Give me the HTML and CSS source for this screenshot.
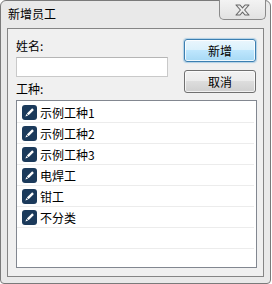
FILE: index.html
```html
<!DOCTYPE html>
<html lang="zh-CN">
<head>
    <meta charset="UTF-8">
    <title>新增员工</title>
    <link rel="stylesheet" href="styles.css">
</head>
<body>
    <div class="window">
        <div class="titlebar">新增员工</div>
        <div class="close">
            <svg width="17" height="12" viewBox="0 0 17 12">
                <path d="M2,1 L6,1 L8.5,3.8 L11,1 L15,1 L10.6,6 L15,11 L11,11 L8.5,8.2 L6,11 L2,11 L6.4,6 Z" fill="#ececec" stroke="#666" stroke-width="1.1" stroke-linejoin="round"/>
            </svg>
        </div>
        <div class="client">
            <div class="top">
                <div class="fields">
                    <div class="label">姓名:</div>
                    <input class="textbox" type="text">
                    <div class="label label_kind">工种:</div>
                </div>
                <div class="buttons">
                    <button class="btn btn_default">新增</button>
                    <button class="btn">取消</button>
                </div>
            </div>
            <div class="listbox" id="kindList">
            </div>
        </div>
    </div>

    <script>
        // 工种リスト
        const kinds = ["示例工种1", "示例工种2", "示例工种3", "电焊工", "钳工", "不分类", "", ""];

        function createRow(name) {
            const row = document.createElement("div");
            row.className = "row";
            if (name) {
                row.innerHTML = '<svg class="check" width="15" height="15" viewBox="0 0 15 15">'
                    + '<rect x="0" y="0" width="15" height="15" rx="3" fill="#1b3a5b"/>'
                    + '<path d="M10.2,3.2 L11.9,4.9 L6.6,10.2 L4.9,8.5 Z" fill="#fff"/>'
                    + '<path d="M4.5,9 L6.1,10.6 L3.4,11.6 Z" fill="#fff"/>'
                    + '</svg>';
                const text = document.createElement("span");
                text.textContent = name;
                row.appendChild(text);
            }
            return row;
        }

        const list = document.getElementById("kindList");
        kinds.forEach(function(k) {
            list.appendChild(createRow(k));
        });
    </script>
</body>
</html>
```

FILE: styles.css
```css
body {
    margin: 0;
    padding: 0;
    background: #ffffff;
    font-family: "Noto Sans CJK SC", "Noto Sans", sans-serif;
    font-size: 12px;
    color: #000;
}
.window {
    position: relative;
    box-sizing: border-box;
    width: 271px;
    height: 284px;
    border: 1px solid #7a7a7a;
    border-radius: 6px 6px 4px 4px;
    background: #e9e9e9;
}
.titlebar {
    height: 27px;
    line-height: 26px;
    padding-left: 7px;
}
.close {
    position: absolute;
    top: -1px;
    left: 218px;
    box-sizing: border-box;
    width: 47px;
    height: 20px;
    border: 1px solid #8a8a8a;
    border-top: none;
    border-radius: 0 0 5px 5px;
    background: linear-gradient(#f3f3f3, #e2e2e2);
    display: flex;
    justify-content: center;
    align-items: center;
}
.client {
    box-sizing: border-box;
    margin: 0 6px 0 6px;
    height: 249px;
    border: 1px solid #858585;
    background: #f0f0f0;
    padding: 9px 8px 0 8px;
    overflow: hidden;
}
.top {
    display: flex;
    align-items: flex-start;
}
.fields {
    width: 152px;
    margin-right: 16px;
}
.label {
    height: 16px;
    line-height: 16px;
}
.textbox {
    display: block;
    box-sizing: border-box;
    width: 152px;
    height: 20px;
    margin: 3px 0 0 0;
    border: 1px solid #c9c9c9;
    border-top-color: #b5b5b5;
    background: #fff;
    outline: none;
}
.label_kind {
    margin-top: 4px;
}
.buttons {
    margin-top: 1px;
    display: flex;
    flex-direction: column;
    gap: 8px;
}
.btn {
    box-sizing: border-box;
    width: 72px;
    height: 23px;
    padding: 0;
    border: 1px solid #707070;
    border-radius: 3px;
    background: linear-gradient(#f2f2f2 0%, #ebebeb 50%, #dddddd 50%, #cfcfcf 100%);
    font-family: inherit;
    font-size: 12px;
    color: #000;
    box-shadow: inset 0 0 0 1px rgba(255, 255, 255, 0.7);
}
.btn_default {
    border-color: #3c7fb1;
    background: linear-gradient(#eaf6fd 0%, #d9f0fc 50%, #bee6fd 50%, #a7d9f5 100%);
    box-shadow: inset 0 0 0 1px rgba(255, 255, 255, 0.8), 0 0 1px 1px rgba(60, 150, 210, 0.35);
}
.listbox {
    box-sizing: border-box;
    width: 241px;
    height: 168px;
    margin-top: 3px;
    padding-top: 1px;
    border: 1px solid #828790;
    background: #fff;
    overflow: hidden;
}
.row {
    box-sizing: border-box;
    height: 21px;
    margin-right: 2px;
    padding-left: 5px;
    border-bottom: 1px solid #ececec;
    display: flex;
    align-items: center;
    gap: 3px;
}
.check {
    flex-shrink: 0;
}
```
